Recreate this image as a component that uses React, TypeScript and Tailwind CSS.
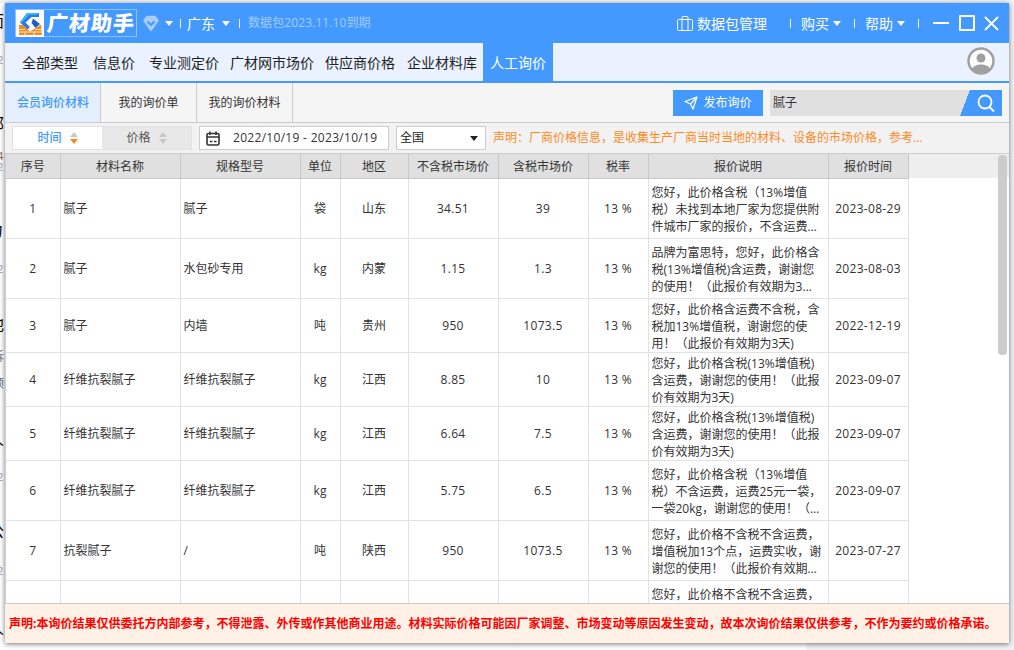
type Row = {
  no: number;
  name: string;
  spec: string;
  unit: string;
  area: string;
  net: string;
  gross: string;
  note: string;
  date: string;
  h: string;
};

const rows: Row[] = [
  { no: 1, name: "腻子", spec: "腻子", unit: "袋", area: "山东", net: "34.51", gross: "39", date: "2023-08-29", h: "h-[60px]", note: "您好，此价格含税（13%增值税）未找到本地厂家为您提供附件城市厂家的报价，不含运费，谢谢您的使用！" },
  { no: 2, name: "腻子", spec: "水包砂专用", unit: "kg", area: "内蒙", net: "1.15", gross: "1.3", date: "2023-08-03", h: "h-[60px]", note: "品牌为富思特，您好，此价格含税(13%增值税)含运费，谢谢您的使用！（此报价有效期为3天）" },
  { no: 3, name: "腻子", spec: "内墙", unit: "吨", area: "贵州", net: "950", gross: "1073.5", date: "2022-12-19", h: "h-[54px]", note: "您好，此价格含运费不含税，含税加13%增值税，谢谢您的使用！（此报价有效期为3天)" },
  { no: 4, name: "纤维抗裂腻子", spec: "纤维抗裂腻子", unit: "kg", area: "江西", net: "8.85", gross: "10", date: "2023-09-07", h: "h-[54px]", note: "您好，此价格含税(13%增值税)含运费，谢谢您的使用！（此报价有效期为3天)" },
  { no: 5, name: "纤维抗裂腻子", spec: "纤维抗裂腻子", unit: "kg", area: "江西", net: "6.64", gross: "7.5", date: "2023-09-07", h: "h-[54px]", note: "您好，此价格含税(13%增值税)含运费，谢谢您的使用！（此报价有效期为3天)" },
  { no: 6, name: "纤维抗裂腻子", spec: "纤维抗裂腻子", unit: "kg", area: "江西", net: "5.75", gross: "6.5", date: "2023-09-07", h: "h-[60px]", note: "您好，此价格含税（13%增值税）不含运费，运费25元一袋，一袋20kg，谢谢您的使用！（此报价有效期为3天）" },
  { no: 7, name: "抗裂腻子", spec: "/", unit: "吨", area: "陕西", net: "950", gross: "1073.5", date: "2023-07-27", h: "h-[60px]", note: "您好，此价格不含税不含运费，增值税加13个点，运费实收，谢谢您的使用！（此报价有效期为3天）" },
  { no: 8, name: "抗裂腻子", spec: "/", unit: "吨", area: "陕西", net: "950", gross: "1073.5", date: "2023-07-27", h: "h-[60px]", note: "您好，此价格不含税不含运费，增值税加13个点，运费实收，谢谢您的使用！（此报价有效期为3天）" },
];

const heads = ["序号", "材料名称", "规格型号", "单位", "地区", "不含税市场价", "含税市场价", "税率", "报价说明", "报价时间"];
const nav = ["全部类型", "信息价", "专业测定价", "广材网市场价", "供应商价格", "企业材料库"];
const navGaps = ["", "ml-[15px]", "ml-[14px]", "ml-[11px]", "ml-[11px]", "ml-[12px]"];

function Logo() {
  return (
    <svg width="28" height="27" viewBox="0 0 28 27" className="shrink-0 bg-white">
      <path d="M11 3 H23 V7 H15.5 L9.5 12.5 L14 17 L11.5 19.5 L4 12.5 Z" fill="#2c7be5" />
      <path d="M11 3 H23 L20 5 H13 L6 12.5 L4 12.5 Z" fill="#33b5f5" />
      <path d="M17 8.5 L24 14 L19.5 18 L15.5 13 Z" fill="#1f5fc4" />
      <path d="M3 15 L7 15 L14 21.5 L25 14.5 L26 25 L3 25 Z" fill="#f58a1f" />
      <path d="M3 19.5 H9 M19 19.5 H26 M3 22 H26 M9 22 V25 M18 22 V25" stroke="#fff" strokeWidth="0.8" fill="none" />
    </svg>
  );
}

function Sep({ className }: { className: string }) {
  return <span className={`block h-[9px] w-px shrink-0 bg-white/90 ${className}`} />;
}

function Caret({ className }: { className: string }) {
  return <span className={`block h-0 w-0 shrink-0 border-x-[4px] border-t-[5px] border-x-transparent ${className}`} />;
}

function SortIcon({ bottom }: { bottom: string }) {
  return (
    <span className="flex flex-col gap-[2px]">
      <span className="h-0 w-0 border-x-[4px] border-b-[5px] border-x-transparent border-b-[#c8c8c8]" />
      <span className={`h-0 w-0 border-x-[4px] border-t-[5px] border-x-transparent ${bottom}`} />
    </span>
  );
}

export default function App() {
  return (
    <div className="relative h-[650px] w-[1014px] overflow-hidden bg-white font-['Open_Sans','Noto_Sans_CJK_SC',sans-serif] [text-spacing-trim:space-all]">
      {/* page behind the window, only its left edge shows */}
      <div className="absolute inset-x-0 top-0 h-[3px] bg-[#f2f2f2]" />
      <div className="absolute bottom-0 left-[806px] right-0 top-0 bg-[#f0f2f5]" />
      <span className="absolute left-[-12px] top-[13px] text-[16px] leading-none text-black">面</span>
      <span className="absolute left-[-3px] top-[54px] text-[11px] leading-none text-gray-400">2</span>
      <span className="absolute left-[-12px] top-[116px] text-[16px] leading-none text-black">邮</span>
      <span className="absolute left-[-3px] top-[150px] text-[11px] leading-none text-[#8a6a5a]">4</span>
      <span className="absolute left-[-3px] top-[161px] text-[11px] leading-none text-gray-400">2</span>
      <span className="absolute left-[-13px] top-[222px] text-[16px] leading-none text-black">力</span>
      <span className="absolute left-[-3px] top-[263px] text-[11px] leading-none text-gray-400">2</span>
      <span className="absolute left-[-12px] top-[316px] text-[16px] leading-none text-black">他</span>
      <span className="absolute left-[-8px] top-[351px] text-[12px] leading-none text-gray-500">诉</span>
      <span className="absolute left-[-8px] top-[378px] text-[12px] leading-none text-gray-500">预</span>
      <span className="absolute left-[-12px] top-[431px] text-[16px] leading-none text-black">人</span>
      <span className="absolute left-[-3px] top-[471px] text-[11px] leading-none text-gray-400">2</span>
      <span className="absolute left-[-12px] top-[523px] text-[16px] leading-none text-black">公</span>
      <span className="absolute left-[-3px] top-[565px] text-[11px] leading-none text-gray-400">2</span>
      <span className="absolute left-[-12px] top-[620px] text-[16px] leading-none text-black">人</span>

      <div className="absolute left-[5px] top-[3px] flex h-[640px] w-[1004px] flex-col overflow-hidden bg-white shadow-[0_1px_5px_rgba(0,0,0,0.55)]">
        {/* title bar */}
        <div className="flex h-[40px] shrink-0 items-center bg-[#4499ff] pl-[10px] pr-[10px] text-white">
          <div className="flex h-[28px] w-[122px] items-center border border-white/40">
            <Logo />
            <span className="ml-[3px] inline-block -skew-x-6 whitespace-nowrap text-[21px] font-black leading-none tracking-[1px]">广材助手</span>
          </div>
          <svg width="16" height="17" viewBox="0 0 16 17" className="ml-[6px]">
            <path d="M4 1.5 H12 L15 5.5 L8 15.5 L1 5.5 Z" fill="#a9cdf8" stroke="#a9cdf8" strokeWidth="1.5" strokeLinejoin="round" />
            <path d="M4.5 6.5 L8 10 L11.5 6.5" fill="none" stroke="#4499ff" strokeWidth="2" />
          </svg>
          <Caret className="ml-[6px] border-t-white" />
          <Sep className="ml-[7px]" />
          <span className="ml-[6px] text-[14px]">广东</span>
          <Caret className="ml-[7px] border-t-white" />
          <Sep className="ml-[9px]" />
          <span className="ml-[8px] text-[12px] tracking-[0.1px] text-white/50">数据包2023.11.10到期</span>
          <div className="ml-auto flex items-center">
            <svg width="16" height="15" viewBox="0 0 16 15" fill="none" stroke="white" strokeWidth="1">
              <rect x="0.5" y="3.5" width="15" height="11" rx="1" />
              <path d="M5 14V1.5a1 1 0 0 1 1-1h4a1 1 0 0 1 1 1V14" />
            </svg>
            <span className="ml-[4px] text-[14px]">数据包管理</span>
            <Sep className="ml-[23px]" />
            <span className="ml-[10px] text-[14px]">购买</span>
            <Caret className="ml-[4px] border-t-white" />
            <Sep className="ml-[13px]" />
            <span className="ml-[10px] text-[14px]">帮助</span>
            <Caret className="ml-[4px] border-t-white" />
            <Sep className="ml-[13px]" />
            <span className="ml-[14px] block h-[2px] w-[16px] bg-white" />
            <span className="ml-[10px] block h-[16px] w-[16px] rounded-[1px] border-2 border-white" />
            <svg width="15" height="15" viewBox="0 0 15 15" className="ml-[9px]" stroke="white" strokeWidth="1.8">
              <path d="M1 1 L14 14 M14 1 L1 14" />
            </svg>
          </div>
        </div>

        {/* main nav */}
        <div className="flex h-[40px] shrink-0 items-stretch border-b-2 border-[#4499ff] bg-[#eaf2ff] pl-[17px] pr-[13px]">
          <div className="flex items-center text-[14px] text-[#222222]">
            {nav.map((n, i) => (
              <span key={n} className={navGaps[i]}>
                {n}
              </span>
            ))}
          </div>
          <div className="ml-[6px] flex w-[70px] items-center justify-center bg-[#4499ff] text-[14px] text-white">人工询价</div>
          <svg width="30" height="30" viewBox="0 0 30 30" className="ml-auto mt-[3px]">
            <circle cx="15" cy="15" r="12.5" fill="#fff" stroke="#a0a0a0" strokeWidth="2.5" />
            <circle cx="15" cy="12" r="4.5" fill="#a0a0a0" />
            <path d="M6 23 C8 17 22 17 24 23 C20 28 10 28 6 23 Z" fill="#a0a0a0" />
          </svg>
        </div>

        {/* sub tabs */}
        <div className="flex h-[40px] shrink-0 items-stretch border-b border-[#cccccc] bg-[#f5f5f5] text-[12px] text-[#333333]">
          <div className="flex w-[96px] items-center justify-center border-r border-[#cccccc] bg-[#e3effd] pl-px font-medium text-[#4499ff]">会员询价材料</div>
          <div className="flex w-[96px] items-center justify-center border-r border-[#cccccc]">我的询价单</div>
          <div className="flex w-[96px] items-center justify-center border-r border-[#cccccc]">我的询价材料</div>
          <div className="ml-auto mr-[7px] flex items-center">
            <button className="flex h-[26px] w-[90px] items-center justify-center gap-[5px] bg-[#4499ff] text-white">
              <svg width="14" height="14" viewBox="0 0 14 14" fill="none" stroke="white" strokeWidth="1.2" strokeLinejoin="round">
                <path d="M1 5.5 L13 1 L9 13 L6.5 8 Z M6.5 8 L13 1" />
              </svg>
              发布询价
            </button>
            <div className="ml-[7px] flex h-[26px] w-[232px] items-stretch">
              <span className="flex flex-1 items-center bg-[#e0e0e0] pl-[3px] text-[#333333]">腻子</span>
              <span className="w-[10px] bg-[linear-gradient(to_top_left,#4499ff_50%,#e0e0e0_50%)]" />
              <span className="flex w-[32px] items-center justify-center bg-[#4499ff]">
                <svg width="20" height="20" viewBox="0 0 20 20" fill="none" stroke="white" strokeWidth="1.8">
                  <circle cx="9" cy="9" r="6.5" />
                  <path d="M13.5 14 L18 18.5" />
                </svg>
              </span>
            </div>
          </div>
        </div>

        {/* filters */}
        <div className="flex h-[31px] shrink-0 items-center border-b border-[#cccccc] bg-[#f2f2f2] pl-[7px] text-[12px]">
          <div className="flex h-[24px] w-[180px] border border-[#e2e2e2]">
            <div className="flex w-[89px] items-center justify-center gap-[8px] bg-white font-medium text-[#4499ff]">
              <span>时间</span>
              <SortIcon bottom="border-t-[#f58a1f]" />
            </div>
            <div className="flex flex-1 items-center justify-center gap-[8px] bg-[#e8e8e8] text-[#555555]">
              <span>价格</span>
              <SortIcon bottom="border-t-[#c8c8c8]" />
            </div>
          </div>
          <div className="ml-[7px] flex h-[24px] w-[190px] items-center border border-[#cccccc] bg-white pl-[6px] text-[#333333]">
            <svg width="14" height="15" viewBox="0 0 14 15" fill="none" stroke="#333333" strokeWidth="1.6">
              <rect x="1" y="2.5" width="12" height="11.5" rx="1.5" />
              <path d="M1 6H13 M4 0.5V4 M10 0.5V4 M4 10.5H6.5 M8 10.5H10.5" />
            </svg>
            <span className="ml-[13px] whitespace-nowrap tracking-[0.3px]">2022/10/19 - 2023/10/19</span>
          </div>
          <div className="ml-[7px] flex h-[24px] w-[90px] items-center justify-between border border-[#cccccc] bg-white pl-[3px] pr-[7px] text-[#222222]">
            <span>全国</span>
            <Caret className="border-t-[#222222]" />
          </div>
          <span className="ml-[7px] whitespace-nowrap text-[#ff8a1f]">声明：厂商价格信息，是收集生产厂商当时当地的材料、设备的市场价格，参考...</span>
        </div>

        {/* table */}
        <div className="relative min-h-0 flex-1 overflow-hidden border-l border-[#d0d0d0] bg-white">
          <table className="w-[902px] table-fixed border-collapse text-center text-[12px] text-[#333333]">
            <colgroup>
              <col className="w-[54px]" />
              <col className="w-[120px]" />
              <col className="w-[120px]" />
              <col className="w-[40px]" />
              <col className="w-[68px]" />
              <col className="w-[90px]" />
              <col className="w-[90px]" />
              <col className="w-[60px]" />
              <col className="w-[180px]" />
              <col className="w-[80px]" />
            </colgroup>
            <thead>
              <tr className="h-[24px] bg-[#e0e0e0]">
                {heads.map((h) => (
                  <th key={h} className="border-x border-b border-[#c8c8c8] px-0 pb-0 pt-[2px] font-normal first:border-l-0">
                    {h}
                  </th>
                ))}
              </tr>
            </thead>
            <tbody>
              {rows.map((r) => (
                <tr key={r.no} className={`${r.h} border-b border-[#e2e2e2]`}>
                  <td className="border-r border-[#e2e2e2] px-0 pb-0 pt-[2px]">{r.no}</td>
                  <td className="border-r border-[#e2e2e2] px-[3px] pb-0 pt-[2px] text-left">{r.name}</td>
                  <td className="border-r border-[#e2e2e2] px-[3px] pb-0 pt-[2px] text-left">{r.spec}</td>
                  <td className="border-r border-[#e2e2e2] px-0 pb-0 pt-[2px]">{r.unit}</td>
                  <td className="border-r border-[#e2e2e2] px-0 pb-0 pt-[2px]">{r.area}</td>
                  <td className="border-r border-[#e2e2e2] px-0 pb-0 pt-[2px] tracking-[0.3px]">{r.net}</td>
                  <td className="border-r border-[#e2e2e2] px-0 pb-0 pt-[2px] tracking-[0.3px]">{r.gross}</td>
                  <td className="border-r border-[#e2e2e2] px-0 pb-0 pt-[2px] tracking-[0.3px]">13 %</td>
                  <td className="border-r border-[#e2e2e2] px-[3px] pb-0 pt-[2px] text-left">
                    <div className="line-clamp-3 leading-[17px]">{r.note}</div>
                  </td>
                  <td className="border-r border-[#e2e2e2] px-0 pb-0 pt-[2px] tracking-[0.3px]">{r.date}</td>
                </tr>
              ))}
            </tbody>
          </table>
          <div className="absolute left-[903px] right-0 top-0 h-[24px] bg-[#eeeeee]" />
          <div className="absolute right-[2px] top-[1px] h-[200px] w-[9px] rounded-[4px] bg-[#cccccc]" />
        </div>

        {/* footer notice */}
        <div className="flex h-[40px] shrink-0 items-center border-t border-[#cccccc] bg-[#fff1e5] pl-[4px] text-[12px] font-bold text-[#ff0000]">
          <span className="whitespace-nowrap">声明:本询价结果仅供委托方内部参考，不得泄露、外传或作其他商业用途。材料实际价格可能因厂家调整、市场变动等原因发生变动，故本次询价结果仅供参考，不作为要约或价格承诺。</span>
        </div>
      </div>
    </div>
  );
}
